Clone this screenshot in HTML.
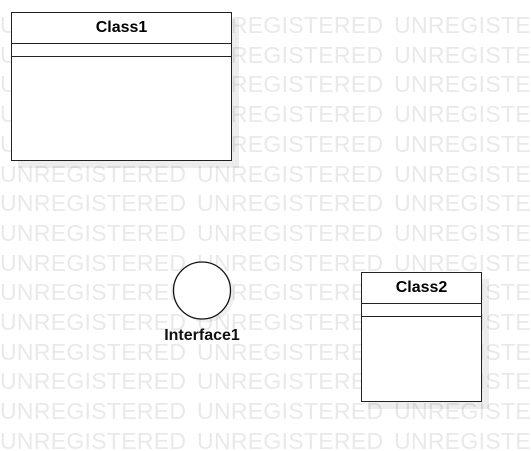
<!DOCTYPE html>
<html><head><style>
body{margin:0;width:531px;height:451px;overflow:hidden;background:#fff;position:relative;font-family:"Liberation Sans",Arial,sans-serif}
.wm{position:absolute;left:0;top:0;width:531px;height:451px;overflow:hidden;color:#e9e9e9;font-size:23px;white-space:pre;word-spacing:4px;letter-spacing:0.3px}
.wm div{position:absolute;left:0;height:0}
.box{position:absolute;border:1.5px solid #222;background:#fff;box-shadow:7px 7px 0 rgba(0,0,0,0.07);box-sizing:border-box}
.hd{position:absolute;left:0;right:0;border-bottom:1.5px solid #222;font-weight:bold;font-size:16px;text-align:center}
.sep{position:absolute;left:0;right:0;border-bottom:1.5px solid #222}
</style></head><body>
<div class="wm" id="wm"></div>
<script>
var w=document.getElementById('wm'),h='';
for(var i=0;i<15;i++){h+='<div style="top:'+(33+i*29.7-21)+'px">UNREGISTERED UNREGISTERED UNREGISTERED</div>';}
w.innerHTML=h;
</script>
<div class="box" style="left:11px;top:12px;width:221px;height:149px">
<div class="hd" style="top:0;height:30px;line-height:30px">Class1</div>
<div class="sep" style="top:31px;height:12px"></div>
</div>
<div class="box" style="left:361px;top:272px;width:121px;height:130px">
<div class="hd" style="top:0;height:30px;line-height:30px">Class2</div>
<div class="sep" style="top:31px;height:12px"></div>
</div>
<svg style="position:absolute;left:0;top:0" width="531" height="451">
<circle cx="206" cy="294" r="28.5" fill="rgba(0,0,0,0.06)"/>
<circle cx="202" cy="290.5" r="28.5" fill="#fff" stroke="#111" stroke-width="1.3"/>
<text x="202" y="340" text-anchor="middle" font-family="Liberation Sans, Arial, sans-serif" font-weight="bold" font-size="16" fill="#111">Interface1</text>
</svg>
</body></html>
